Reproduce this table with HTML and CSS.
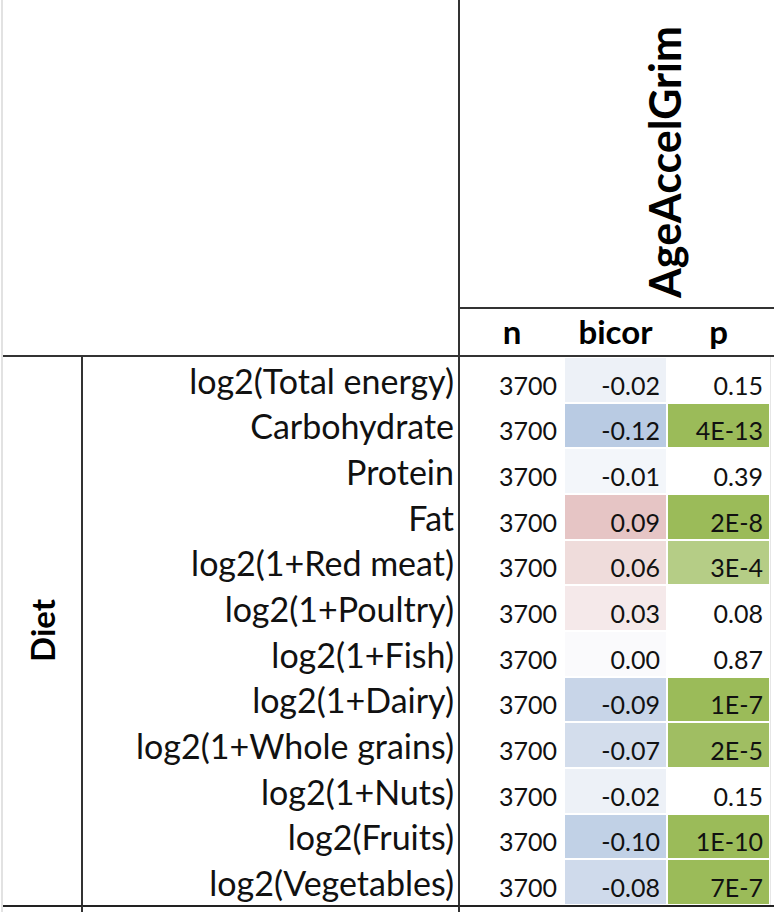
FILE: index.html
```html
<!DOCTYPE html>
<html lang="en">
<head>
<meta charset="utf-8">
<title>AgeAccelGrim diet table</title>
<link rel="stylesheet" href="styles.css">
</head>
<body>
<div class="sheet">
  <div class="corner"></div>
  <div class="title-cell"><span class="title">AgeAccelGrim</span></div>
  <div class="head">n</div>
  <div class="head">bicor</div>
  <div class="head">p</div>
  <div class="head-fill"></div>

  <div class="group"><span class="group-label">Diet</span></div>

  <div class="label">log2(Total energy)</div><div class="num">3700</div><div class="num c-b1">-0.02</div><div class="num">0.15</div><div class="fill"></div>
  <div class="label">Carbohydrate</div><div class="num">3700</div><div class="num c-b6">-0.12</div><div class="num c-g">4E-13</div><div class="fill"></div>
  <div class="label">Protein</div><div class="num">3700</div><div class="num c-b0">-0.01</div><div class="num">0.39</div><div class="fill"></div>
  <div class="label">Fat</div><div class="num">3700</div><div class="num c-r3">0.09</div><div class="num c-g">2E-8</div><div class="fill"></div>
  <div class="label">log2(1+Red meat)</div><div class="num">3700</div><div class="num c-r2">0.06</div><div class="num c-g2">3E-4</div><div class="fill"></div>
  <div class="label">log2(1+Poultry)</div><div class="num">3700</div><div class="num c-r1">0.03</div><div class="num">0.08</div><div class="fill"></div>
  <div class="label">log2(1+Fish)</div><div class="num">3700</div><div class="num c-n">0.00</div><div class="num">0.87</div><div class="fill"></div>
  <div class="label">log2(1+Dairy)</div><div class="num">3700</div><div class="num c-b4">-0.09</div><div class="num c-g">1E-7</div><div class="fill"></div>
  <div class="label">log2(1+Whole grains)</div><div class="num">3700</div><div class="num c-b3">-0.07</div><div class="num c-g1">2E-5</div><div class="fill"></div>
  <div class="label">log2(1+Nuts)</div><div class="num">3700</div><div class="num c-b1">-0.02</div><div class="num">0.15</div><div class="fill"></div>
  <div class="label">log2(Fruits)</div><div class="num">3700</div><div class="num c-b5">-0.10</div><div class="num c-g">1E-10</div><div class="fill"></div>
  <div class="label">log2(Vegetables)</div><div class="num">3700</div><div class="num c-b3b">-0.08</div><div class="num c-g">7E-7</div><div class="fill"></div>

  <div class="foot-a"></div>
  <div class="foot-b"></div>
  <div class="foot-c"></div>
</div>
</body>
</html>
```
FILE: styles.css
```css
* { box-sizing: border-box; }
html, body { margin: 0; padding: 0; background: #fff; }
body {
  font-family: Lato, "Open Sans", sans-serif;
  color: #111;
  width: 774px;
  height: 912px;
  overflow: hidden;
}
.sheet {
  margin-left: 1px;
  border-left: 2px solid #e2e2e2;
  height: 912px;
  display: grid;
  grid-template-columns: 80px 377px 104px 103px 103px 1fr;
  grid-template-rows: 309px 48px repeat(12, 45.67px) 1fr;
}
.corner {
  grid-column: 1 / 3;
  grid-row: 1 / 3;
  border-right: 2px solid #333;
  border-bottom: 2px solid #333;
}
.title-cell {
  grid-column: 3 / 7;
  grid-row: 1;
  border-bottom: 2px solid #333;
  display: flex;
  align-items: flex-end;
  padding: 0 0 9px 183px;
}
.title {
  writing-mode: vertical-rl;
  transform: rotate(180deg);
  font-weight: 700;
  font-size: 43px;
  line-height: 1;
  color: #000;
}
.head {
  border-bottom: 2px solid #333;
  display: flex;
  align-items: flex-end;
  justify-content: center;
  padding-bottom: 7px;
  font-weight: 700;
  font-size: 33px;
  line-height: 1;
  color: #000;
}
.head-fill { border-bottom: 2px solid #333; }
.group {
  grid-column: 1;
  grid-row: 3 / 15;
  border-right: 2px solid #333;
  display: flex;
  align-items: center;
  justify-content: center;
}
.group-label {
  writing-mode: vertical-rl;
  transform: rotate(180deg);
  font-weight: 700;
  font-size: 33px;
  line-height: 1;
  color: #000;
}
.label {
  grid-column: 2;
  border-right: 2px solid #333;
  display: flex;
  align-items: flex-end;
  justify-content: flex-end;
  padding: 0 4px 5px 0;
  font-size: 34px;
  line-height: 1;
  white-space: nowrap;
}
.num {
  display: flex;
  align-items: flex-end;
  justify-content: flex-end;
  padding: 0 7px 5px 0;
  font-size: 25px;
  line-height: 1;
  box-shadow: inset 0 0 0 1px #fff;
}
.fill { border-left: 1px solid #e6e6e6; }
.c-n  { background: #fafafc; }
.c-b0 { background: #f3f6fa; }
.c-b1 { background: #edf1f7; }
.c-b3 { background: #d3ddec; }
.c-b3b{ background: #cfdaeb; }
.c-b4 { background: #c8d5e8; }
.c-b5 { background: #c1d1e6; }
.c-b6 { background: #b9cbe3; }
.c-r1 { background: #f5e9ea; }
.c-r2 { background: #efdcdb; }
.c-r3 { background: #e6c5c5; }
.c-g  { background: #9bbb59; }
.c-g1 { background: #a0be62; }
.c-g2 { background: #b5cd86; }
.foot-a {
  grid-column: 1;
  border-top: 2px solid #222;
  border-right: 2px solid #333;
}
.foot-b {
  grid-column: 2;
  border-top: 2px solid #222;
  border-right: 2px solid #333;
}
.foot-c {
  grid-column: 3 / 7;
  border-top: 2px solid #222;
}
```
